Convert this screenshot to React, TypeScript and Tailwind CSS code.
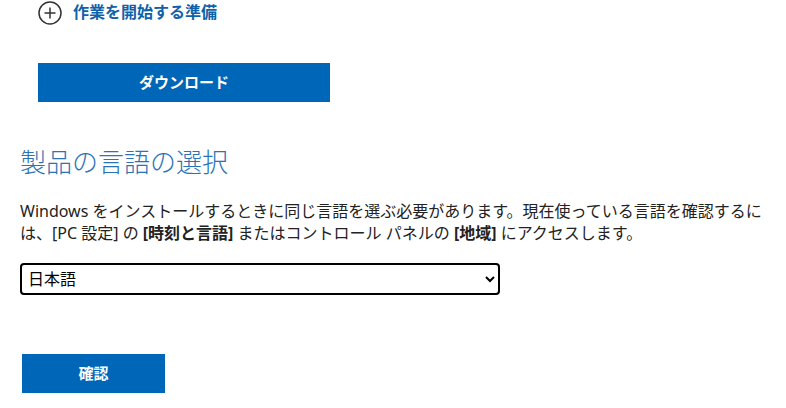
export default function App() {
  const font = { fontFamily: '"Segoe UI", "Noto Sans", "Noto Sans CJK JP", sans-serif' }
  return (
    <div className="w-[786px] h-[408px] bg-white text-[#222] overflow-hidden" style={font}>
      <div className="pl-[38px] pt-[1px]">
        <div className="flex items-center h-[24px] gap-[11px]">
          <svg width="24" height="24" viewBox="0 0 24 24" className="shrink-0">
            <circle cx="12" cy="12" r="11" fill="none" stroke="#333" strokeWidth="1.5" />
            <path d="M12 6.5v11M6.5 12h11" stroke="#333" strokeWidth="1.5" />
          </svg>
          <span className="text-[16px] font-bold text-[#0f62a8] leading-none -mt-[2px]">作業を開始する準備</span>
        </div>
        <button className="mt-[38px] w-[292px] h-[39px] bg-[#0067b8] text-white text-[15px] font-bold flex items-center justify-center">
          ダウンロード
        </button>
      </div>

      <div className="px-[20px]">
        <h2 className="mt-[45px] text-[26px] leading-[30px] font-light text-[#2c73b5]">製品の言語の選択</h2>
        <p className="mt-[23px] w-[760px] text-[16px] leading-[22px]">
          Windows をインストールするときに同じ言語を選ぶ必要があります。現在使っている言語を確認するには、[PC 設定] の <b>[時刻と言語]</b> またはコントロール パネルの <b>[地域]</b> にアクセスします。
        </p>
        <select className="mt-[19px] block w-[480px] h-[32px] border-2 border-black rounded-[4px] pl-[2px] text-[16px] text-black bg-white">
          <option>日本語</option>
        </select>
        <button className="mt-[59px] ml-[2px] w-[143px] h-[39px] bg-[#0067b8] text-white text-[15px] font-bold flex items-center justify-center">
          確認
        </button>
      </div>
    </div>
  )
}
